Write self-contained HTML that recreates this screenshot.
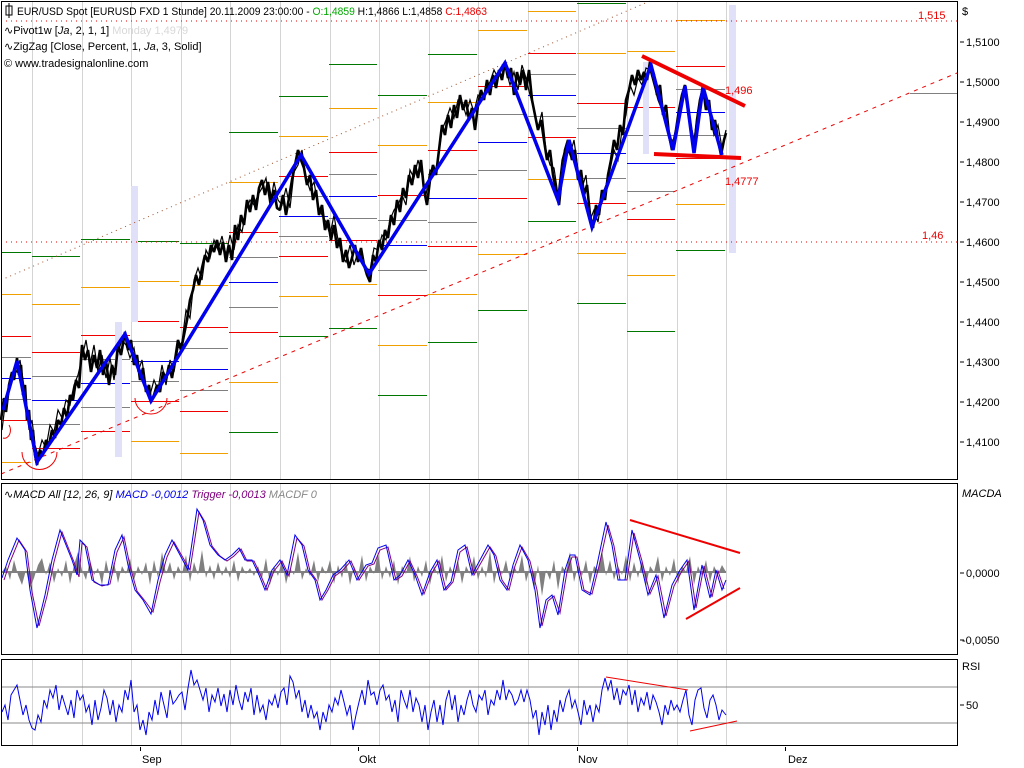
<!DOCTYPE html>
<html><head><meta charset="utf-8"><style>
html,body{margin:0;padding:0;background:#fff;width:1024px;height:768px;overflow:hidden}
svg{display:block;font-family:"Liberation Sans","DejaVu Sans",sans-serif}
</style></head><body>
<svg width="1024" height="768" viewBox="0 0 1024 768" xmlns="http://www.w3.org/2000/svg">
<rect width="1024" height="768" fill="#fff"/>
<!-- grid -->
<path stroke="#d4d4d4" stroke-width="1" fill="none" d="M32.5,2V479M82.5,2V479M131.5,2V479M181.5,2V479M230.5,2V479M280.5,2V479M330.5,2V479M379.5,2V479M429.5,2V479M478.5,2V479M528.5,2V479M578.5,2V479M627.5,2V479M677.5,2V479M726.5,2V479
M32.5,484V654M82.5,484V654M131.5,484V654M181.5,484V654M230.5,484V654M280.5,484V654M330.5,484V654M379.5,484V654M429.5,484V654M478.5,484V654M528.5,484V654M578.5,484V654M627.5,484V654M677.5,484V654M726.5,484V654
M32.5,660V745M82.5,660V745M131.5,660V745M181.5,660V745M230.5,660V745M280.5,660V745M330.5,660V745M379.5,660V745M429.5,660V745M478.5,660V745M528.5,660V745M578.5,660V745M627.5,660V745M677.5,660V745M726.5,660V745"/>
<!-- pivots -->
<path stroke="#007700" fill="none" d="M1,252.5H31M32,256.5H80M81,239.5H130M131,241.5H179M180,243.5H228M229,132.5H278M229,432.5H278M279,96.5H328M279,336.5H328M329,64.5H377M329,328.5H377M378,95.5H427M378,395.5H427M428,54.5H477M428,342.5H477M478,310.5H527M528,221.5H576M577,3.5H626M577,303.5H626M627,331.5H675M676,250.5H725"/>
<path stroke="#f0a000" fill="none" d="M1,294.5H31M1,462.5H31M32,304.5H80M81,287.5H130M131,281.5H179M131,441.5H179M180,285.5H228M180,453.5H228M229,182.5H278M229,382.5H278M279,136.5H328M279,296.5H328M329,108.5H377M329,284.5H377M378,145.5H427M378,345.5H427M428,102.5H477M428,294.5H477M478,30.5H527M478,254.5H527M528,11.5H576M528,179.5H576M577,53.5H626M577,253.5H626M627,51.5H675M627,275.5H675M676,20.5H725M676,204.5H725"/>
<path stroke="#ee0000" fill="none" d="M1,336.5H31M1,420.5H31M32,352.5H80M32,448.5H80M81,335.5H130M81,431.5H130M131,321.5H179M131,401.5H179M180,327.5H228M180,411.5H228M229,232.5H278M229,332.5H278M279,176.5H328M279,256.5H328M329,152.5H377M329,240.5H377M378,195.5H427M378,295.5H427M428,150.5H477M428,246.5H477M478,86.5H527M478,198.5H527M528,53.5H576M528,137.5H576M577,103.5H626M577,203.5H626M627,107.5H675M627,219.5H675M676,66.5H725M676,158.5H725"/>
<path stroke="#808080" fill="none" d="M1,357.5H31M1,399.5H31M32,376.5H80M32,424.5H80M81,359.5H130M81,407.5H130M131,341.5H179M131,381.5H179M180,348.5H228M180,390.5H228M229,257.5H278M229,307.5H278M279,196.5H328M279,236.5H328M329,174.5H377M329,218.5H377M378,220.5H427M378,270.5H427M428,174.5H477M428,222.5H477M478,114.5H527M478,170.5H527M528,74.5H576M528,116.5H576M577,128.5H626M577,178.5H626M627,135.5H675M627,191.5H675M676,89.5H725M676,135.5H725M910,93.5H957"/>
<path stroke="#0000ee" fill="none" d="M1,378.5H31M32,400.5H80M81,383.5H130M131,361.5H179M180,369.5H228M229,282.5H278M279,216.5H328M329,196.5H377M378,245.5H427M428,198.5H477M478,142.5H527M528,95.5H576M577,153.5H626M627,163.5H675M676,112.5H725"/>
<!-- lavender bars -->
<rect x="115" y="322" width="7" height="135" fill="#e0e0f8"/>
<rect x="131" y="186" width="7" height="136" fill="#e0e0f8"/>
<rect x="643" y="62" width="6" height="92" fill="#e0e0f8"/>
<rect x="729" y="5" width="7" height="248" fill="#e0e0f8"/>
<!-- dotted lines -->
<line x1="1" y1="21" x2="957" y2="21" stroke="#e00" stroke-dasharray="1,4"/>
<line x1="1" y1="242" x2="957" y2="242" stroke="#e00" stroke-dasharray="1,4"/>
<line x1="1" y1="280" x2="650" y2="1" stroke="#a0522d" stroke-dasharray="1,4"/>
<line x1="1" y1="474" x2="957" y2="73" stroke="#e00" stroke-dasharray="4,5"/>
<!-- price -->
<polyline fill="none" stroke="#000" stroke-width="2.6" stroke-linejoin="bevel" points="1,420 4,398 6,412 9,385 12,372 14,380 17,358 19,375 21,365 23,395 25,385 27,420 29,410 31,440 33,430 35,455 37,465 40,450 43,455 46,440 49,445 52,430 55,438 58,420 61,425 64,408 67,418 70,395 73,400 76,380 79,388 82,345 85,360 88,350 91,372 94,355 97,368 100,350 103,375 106,360 109,385 112,365 115,375 118,345 121,355 125,332 128,350 131,340 134,365 137,355 140,380 143,368 146,392 149,385 151,402 154,395 157,385 160,392 163,372 166,380 169,365 172,378 175,360 178,340 181,350 184,335 187,320 190,300 193,290 196,275 199,285 202,268 205,255 208,262 211,245 214,252 217,240 220,255 223,242 226,262 229,245 232,260 235,225 238,240 241,215 244,225 247,200 250,212 253,195 256,210 259,188 262,180 265,195 268,182 271,200 274,190 277,208 280,210 283,195 286,215 289,198 292,180 295,165 298,150 301,160 304,168 307,185 310,175 313,200 316,190 319,215 322,205 325,230 328,220 331,240 334,225 337,248 340,238 343,262 346,250 349,268 352,258 355,245 358,262 361,248 364,265 367,275 370,282 373,255 376,262 379,240 382,250 385,230 388,238 391,215 394,225 397,200 400,212 403,188 406,198 409,175 412,185 415,165 418,178 421,160 424,190 427,205 430,180 433,165 436,175 439,150 442,125 445,135 448,115 451,128 454,105 457,118 460,95 463,110 466,100 469,120 472,108 475,130 478,105 481,90 484,100 487,80 490,95 493,75 496,88 499,70 502,80 505,62 508,78 511,68 514,95 517,72 520,85 523,70 526,90 529,70 532,100 535,115 538,130 541,120 544,140 547,160 550,150 553,175 556,190 559,205 562,175 565,150 568,140 572,160 575,150 578,180 581,170 584,195 587,185 590,215 593,228 596,205 599,215 602,190 605,200 608,175 611,160 614,140 617,150 620,125 623,135 626,100 629,90 632,75 635,85 638,70 641,80 644,72 647,80 650,62 654,75 657,95 660,85 663,115 666,105 669,135 672,150 676,130 679,110 682,95 685,85 688,110 691,130 694,150 697,120 700,100 703,88 706,110 709,100 712,130 715,120 718,140 721,155 724,140 726,133"/>
<polyline fill="none" stroke="#000" stroke-width="1.2" points="2,430 5,405 8,395 11,380 14,368 17,372 20,360 23,380 26,400 29,430 32,420 35,445 38,455 42,440 46,448 50,425 54,432 58,410 62,418 66,400 70,405 74,385 78,375 82,358 86,340 90,365 94,345 98,372 102,355 106,378 110,358 114,380 118,352 122,340 126,345 130,358 134,348 138,372 142,360 146,388 150,395 154,380 158,390 162,365 166,385 170,360 174,372 178,348 182,342 186,310 190,318 194,280 198,268 202,280 206,250 210,258 214,240 218,250 222,236 226,255 230,235 234,250 238,225 242,232 246,210 250,200 254,205 258,195 262,188 266,178 270,205 274,182 278,200 282,205 286,188 290,208 294,172 298,165 302,150 306,178 310,190 314,182 318,205 322,215 326,222 330,235 334,215 338,240 342,255 346,262 350,245 354,265 358,252 362,258 366,268 370,270 374,248 378,250 382,235 386,240 390,220 394,210 398,205 402,195 406,205 410,170 414,178 418,160 422,175 426,195 430,170 434,175 438,160 442,130 446,120 450,108 454,118 458,100 462,102 466,115 470,100 474,112 478,95 482,98 486,88 490,82 494,70 498,78 502,68 506,70 510,85 514,72 518,90 522,65 526,78 530,95 534,110 538,128 542,112 546,150 550,165 554,168 558,195 562,160 566,145 570,155 574,140 578,170 582,188 586,175 590,220 594,210 598,222 602,195 606,185 610,170 614,150 618,160 622,130 626,115 630,85 634,95 638,78 642,85 646,68 650,70 654,85 658,100 662,110 666,120 670,140 674,140 678,120 682,100 686,92 690,120 694,140 698,110 702,92 706,95 710,115 714,135 718,125 722,148 726,130"/>
<polyline fill="none" stroke="#0000ee" stroke-width="3.5" points="3,410 17,361 37,462 125,334 151,401 301,155 369,274 505,63 558,200 569,140 592,227 651,65 673,150 685,86 694,153 703,87 722,155"/>
<!-- red circles -->
<path d="M22,452 A16,16 0 0 0 57,452" fill="none" stroke="#e00"/>
<path d="M135,398 A16,16 0 0 0 167,398" fill="none" stroke="#e00"/>
<path d="M3,438 A6,8 0 0 0 9,425" fill="none" stroke="#e00"/>
<!-- trend lines -->
<line x1="642" y1="56" x2="745" y2="106" stroke="#e00" stroke-width="4"/>
<line x1="654" y1="154" x2="741" y2="158" stroke="#e00" stroke-width="4"/>
<text x="725" y="94" font-size="11" fill="#e00">1,496</text>
<text x="725" y="185" font-size="11" fill="#e00">1,4777</text>
<text x="918" y="19" font-size="11" fill="#e00">1,515</text>
<text x="922" y="239" font-size="11" fill="#e00">1,46</text>
<!-- panels -->
<rect x="1.5" y="1.5" width="956" height="478" fill="none" stroke="#000"/>
<rect x="1.5" y="483.5" width="956" height="171" fill="none" stroke="#000"/>
<rect x="1.5" y="659.5" width="956" height="86" fill="none" stroke="#000"/>
<!-- macd histogram -->
<polygon fill="#808080" points="2,572 6,566 10,580 14,560 18,575 22,585 26,570 30,588 34,578 38,565 42,558 46,575 50,562 54,583 58,568 62,577 66,560 70,584 74,565 78,552 82,570 86,580 90,560 94,575 98,568 102,585 106,560 110,578 114,562 118,583 122,566 126,574 130,558 134,580 138,566 142,575 146,562 150,585 154,560 158,578 162,552 166,574 170,562 174,580 178,566 182,574 186,555 190,582 194,562 198,575 202,550 206,578 210,565 214,580 218,562 222,576 226,566 230,578 234,560 238,582 242,566 246,574 250,568 254,576 258,566 262,578 266,558 270,585 274,566 278,576 282,560 286,584 290,568 294,575 298,552 302,580 306,568 310,576 314,560 318,582 322,566 326,574 330,560 334,584 338,565 342,578 346,560 350,585 354,566 358,576 362,555 366,582 370,566 374,574 378,552 382,580 386,566 390,578 394,560 398,585 402,566 406,574 410,556 414,582 418,566 422,577 426,560 430,585 434,566 438,575 442,555 446,582 450,566 454,576 458,560 462,584 466,566 470,574 474,556 478,580 482,566 486,578 490,550 494,584 498,566 502,575 506,560 510,580 514,566 518,574 522,555 526,582 530,568 534,590 538,565 542,596 546,570 550,580 554,560 558,590 562,566 566,572 570,552 574,582 578,566 582,576 586,560 590,584 594,566 598,570 602,550 606,576 610,560 614,580 618,566 622,575 626,555 630,582 634,562 638,578 642,560 646,586 650,566 654,572 658,556 662,582 666,566 670,576 674,558 678,584 682,566 686,572 690,556 694,585 698,566 702,576 706,560 710,582 714,566 718,574 722,565 726,572 726,572"/>
<line x1="2" y1="572" x2="726" y2="572" stroke="#808080" stroke-width="2"/>
<polyline fill="none" stroke="#800080" points="4,580 10,562 19,540 27,552 32,592 39,626 47,596 54,562 62,532 68,547 74,562 79,577 82,543 87,547 94,582 102,586 110,584 117,552 124,537 130,566 137,591 145,601 153,612 160,582 167,557 174,542 182,556 190,570 199,512 205,522 212,546 220,556 227,561 234,556 241,549 247,561 254,561 261,576 267,590 274,571 282,561 289,576 297,538 304,546 310,571 317,581 322,600 328,590 335,576 342,571 351,561 359,580 368,566 374,564 380,550 388,547 396,580 402,576 410,561 417,576 424,594 432,573 439,561 446,590 453,582 460,552 467,547 474,575 482,561 490,547 496,556 502,580 509,590 515,566 522,547 530,561 537,590 542,626 548,601 554,596 560,613 567,572 572,557 577,557 584,590 592,594 599,566 608,525 614,546 620,580 627,580 634,533 642,561 650,594 658,576 666,616 674,586 682,571 689,561 696,608 704,566 712,597 718,571 724,589"/>
<polyline fill="none" stroke="#0000ee" points="2,578 8,560 17,538 25,550 30,590 37,628 45,595 52,560 60,530 66,545 72,560 77,575 80,540 85,545 92,580 100,585 108,585 115,550 122,535 128,565 135,590 143,600 151,614 158,580 165,555 172,540 180,555 188,570 197,509 203,520 210,545 218,555 225,560 232,555 239,548 245,560 252,560 259,575 265,590 272,570 280,560 287,575 295,535 302,545 308,570 315,580 320,600 326,590 333,575 340,570 349,560 357,580 366,565 372,563 378,548 386,545 394,580 400,575 408,560 415,575 422,595 430,572 437,560 444,590 451,582 458,550 465,545 472,575 480,560 488,545 494,555 500,580 507,590 513,565 520,545 528,560 535,590 540,628 546,600 552,595 558,615 565,570 570,555 575,555 582,590 590,595 597,565 606,522 612,545 618,580 625,580 632,530 640,560 648,595 656,575 664,618 672,585 680,570 687,560 694,610 702,565 710,598 716,570 722,590 726,580"/>
<line x1="630" y1="520" x2="740" y2="553" stroke="#e00" stroke-width="2"/>
<line x1="686" y1="619" x2="740" y2="588" stroke="#e00" stroke-width="2"/>
<!-- rsi -->
<line x1="2" y1="687" x2="957" y2="687" stroke="#888"/>
<line x1="2" y1="723" x2="957" y2="723" stroke="#888"/>
<polyline fill="none" stroke="#0000ee" points="2,712 5,705 8,720 11,695 14,690 17,685 20,700 23,715 26,705 29,720 32,728 35,730 38,715 41,722 44,700 47,708 50,690 53,698 56,685 59,710 62,695 65,705 68,715 71,700 74,718 77,690 80,700 83,695 86,712 89,705 92,725 95,700 98,720 101,708 104,690 107,698 110,715 113,700 116,722 119,705 122,712 125,690 128,700 131,680 134,712 137,705 140,730 143,720 146,735 149,712 152,720 155,700 158,715 161,692 164,705 167,718 170,690 173,704 176,700 179,695 182,692 185,710 188,688 191,670 194,685 197,680 200,690 203,700 206,688 209,712 212,695 215,702 218,688 221,706 224,694 227,712 230,690 233,705 236,685 239,700 242,710 245,692 248,702 251,688 254,715 257,695 260,712 263,705 266,720 269,700 272,705 275,695 278,708 281,692 284,688 287,705 290,676 293,682 296,698 299,690 302,712 305,700 308,718 311,705 314,718 317,712 320,730 323,712 326,722 329,705 332,712 335,698 338,705 341,690 344,702 347,715 350,705 353,730 356,715 359,702 362,690 365,705 368,680 371,695 374,692 377,705 380,690 383,685 386,700 389,695 392,712 395,700 398,722 401,690 404,700 407,708 410,690 413,712 416,698 419,705 422,722 425,705 428,730 431,712 434,700 437,722 440,705 443,725 446,700 449,690 452,710 455,695 458,722 461,705 464,715 467,700 470,690 473,705 476,712 479,695 482,700 485,690 488,715 491,700 494,705 497,690 500,700 503,680 506,700 509,690 512,695 515,705 518,700 521,690 524,702 527,690 530,700 533,718 536,710 539,735 542,712 545,725 548,705 551,730 554,710 557,722 560,700 563,712 566,698 569,690 572,708 575,700 578,712 581,725 584,700 587,715 590,705 593,722 596,705 599,712 602,690 605,678 608,690 611,680 614,700 617,688 620,705 623,690 626,695 629,685 632,705 635,690 638,712 641,698 644,705 647,692 650,710 653,695 656,702 659,712 662,725 665,705 668,715 671,700 674,710 677,705 680,712 683,700 686,690 689,715 692,725 695,700 698,690 701,688 704,708 707,718 710,700 713,695 716,705 719,720 722,710 726,715"/>
<line x1="606" y1="677" x2="688" y2="690" stroke="#e00"/>
<line x1="690" y1="731" x2="737" y2="721" stroke="#e00"/>
<!-- legend -->
<g font-size="11" fill="#000">
<rect x="6" y="6" width="6" height="9" fill="none" stroke="#000"/><line x1="9" y1="3" x2="9" y2="18" stroke="#000"/>
<text x="17" y="15" textLength="470" lengthAdjust="spacingAndGlyphs">EUR/USD Spot [EURUSD FXD  1 Stunde] 20.11.2009 23:00:00 - <tspan fill="#00aa00">O:1,4859</tspan> H:1,4866 L:1,4858 <tspan fill="#e00">C:1,4863</tspan></text>
<text x="4" y="34">∿Pivot1w [<tspan font-style="italic">Ja</tspan>, 2, 1, 1] <tspan fill="#d8d8d8">Monday 1,4979</tspan></text>
<text x="4" y="50">∿ZigZag [Close, Percent, 1, <tspan font-style="italic">Ja</tspan>, 3, Solid]</text>
<text x="4" y="67">© www.tradesignalonline.com</text>
<text x="4" y="498" font-style="italic">∿MACD All [12, 26, 9] <tspan fill="#0000ee">MACD -0,0012</tspan> <tspan fill="#800080">Trigger -0,0013</tspan> <tspan fill="#888">MACDF 0</tspan></text>
</g>
<!-- axis -->
<g font-size="11" fill="#000">
<text x="962" y="15">$</text>
<text x="966" y="46">1,5100</text>
<text x="966" y="86">1,5000</text>
<text x="966" y="126">1,4900</text>
<text x="966" y="166">1,4800</text>
<text x="966" y="206">1,4700</text>
<text x="966" y="246">1,4600</text>
<text x="966" y="286">1,4500</text>
<text x="966" y="326">1,4400</text>
<text x="966" y="366">1,4300</text>
<text x="966" y="406">1,4200</text>
<text x="966" y="446">1,4100</text>
<text x="962" y="497" font-style="italic">MACDA</text>
<text x="966" y="577">0,0000</text>
<text x="962" y="644">-0,0050</text>
<text x="962" y="670">RSI</text>
<text x="966" y="709">50</text>
<text x="142" y="763">Sep</text>
<text x="359" y="763">Okt</text>
<text x="578" y="763">Nov</text>
<text x="788" y="763">Dez</text>
</g>
<path stroke="#000" fill="none" d="M140.5,747V751M358.5,747V751M577.5,747V751M785.5,747V751M960,573H964M960,640H964M960,705H964M960,42H964M960,82H964M960,122H964M960,162H964M960,202H964M960,242H964M960,282H964M960,322H964M960,362H964M960,402H964M960,442H964"/>
</svg>
</body></html>
